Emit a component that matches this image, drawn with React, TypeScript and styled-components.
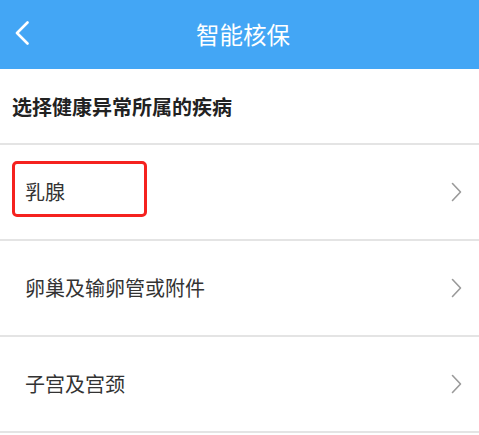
import styled, { createGlobalStyle } from "styled-components";

const items = ["乳腺", "卵巢及输卵管或附件", "子宫及宫颈"];

function App() {
  return (
    <Page>
      <GlobalStyle />
      <Header>
        <BackButton aria-label="返回">
          <svg width="14" height="24" viewBox="0 0 14 24">
            <path
              d="M12.5 1.5 L2 12 L12.5 22.5"
              fill="none"
              stroke="#fff"
              strokeWidth="2.6"
              strokeLinecap="round"
              strokeLinejoin="round"
            />
          </svg>
        </BackButton>
        <Title>智能核保</Title>
      </Header>

      <SectionTitle>选择健康异常所属的疾病</SectionTitle>

      <List>
        {items.map((item, i) => (
          <Row key={item}>
            <Label $highlighted={i === 0}>{item}</Label>
            <svg width="11" height="20" viewBox="0 0 11 20">
              <path
                d="M1.5 1.5 L9.5 10 L1.5 18.5"
                fill="none"
                stroke="#9a9a9a"
                strokeWidth="1.6"
                strokeLinecap="round"
                strokeLinejoin="round"
              />
            </svg>
          </Row>
        ))}
      </List>
    </Page>
  );
}

const GlobalStyle = createGlobalStyle`
  body {
    margin: 0;
    background: #fff;
    font-family: "Noto Sans CJK SC", "Noto Sans", sans-serif;
  }
`;

const Page = styled.div`
  width: 479px;
  background: #fff;
`;

const Header = styled.header`
  position: relative;
  height: 69px;
  background: #43a6f5;
  display: flex;
  align-items: center;
  justify-content: center;
`;

const BackButton = styled.button`
  position: absolute;
  left: 15px;
  top: 21px;
  padding: 0;
  border: 0;
  background: none;
  display: flex;
`;

const Title = styled.h1`
  margin: 0 0 0 7px;
  color: #fff;
  font-size: 23.5px;
  font-weight: 400;
  line-height: 1;
`;

const SectionTitle = styled.div`
  height: 74px;
  padding-left: 12px;
  display: flex;
  align-items: center;
  font-size: 20px;
  font-weight: 700;
  color: #222;
  border-bottom: 2px solid #e4e4e4;
`;

const List = styled.div`
  display: flex;
  flex-direction: column;
`;

const Row = styled.div`
  height: 94px;
  padding: 0 17px 0 25px;
  display: flex;
  align-items: center;
  justify-content: space-between;
  border-bottom: 2px solid #e4e4e4;
`;

const Label = styled.span<{ $highlighted?: boolean }>`
  position: relative;
  font-size: 20px;
  line-height: 24px;
  color: #333;

  ${({ $highlighted }) =>
    $highlighted &&
    `
    &::after {
      content: "";
      position: absolute;
      left: -13px;
      right: -82px;
      top: -19px;
      bottom: -13px;
      border: 3px solid #f5221f;
      border-radius: 5px;
    }
  `}
`;

export default App;
